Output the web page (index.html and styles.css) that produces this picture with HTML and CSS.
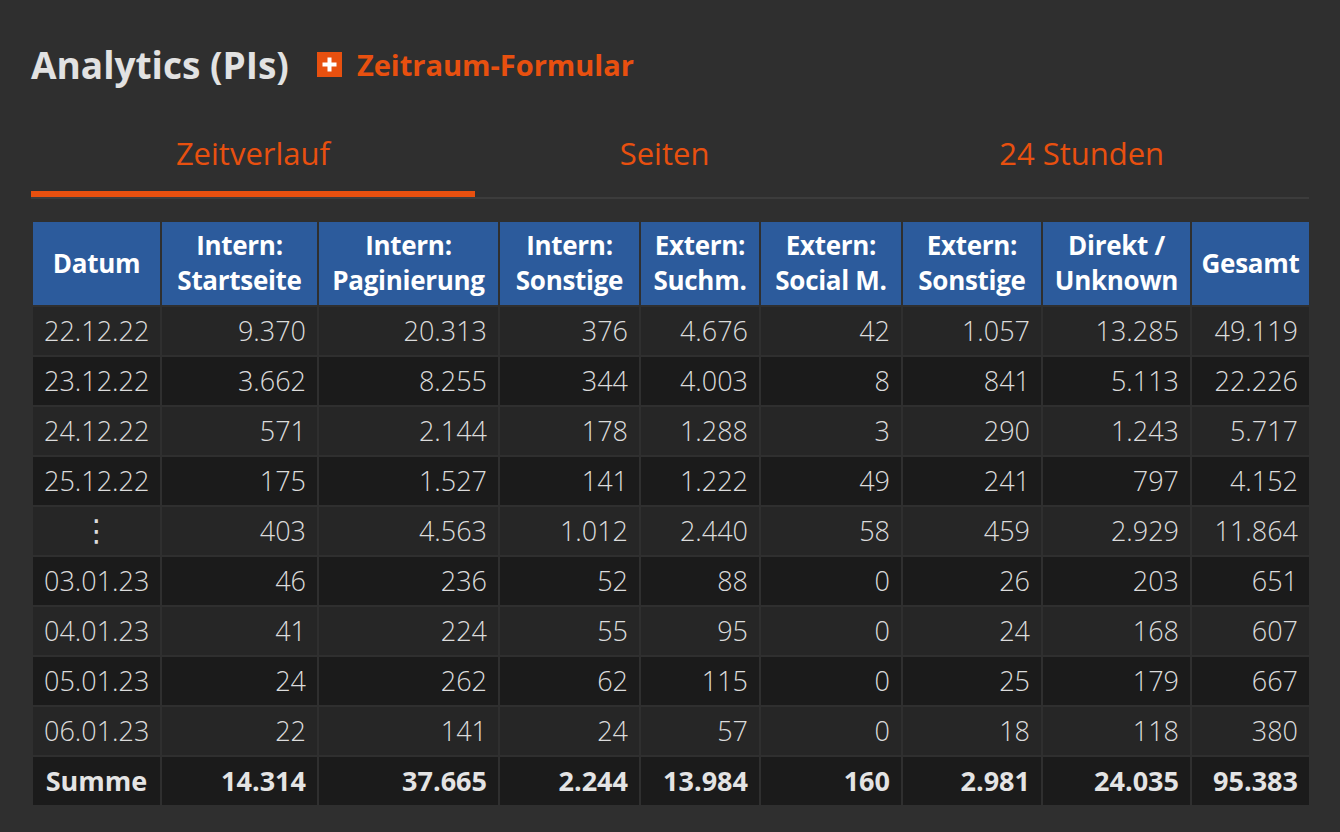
FILE: index.html
```html
<!DOCTYPE html>
<html lang="de">
<head>
<meta charset="utf-8">
<title>Analytics (PIs)</title>
<link rel="stylesheet" href="styles.css">
</head>
<body>
<div class="page">
  <div class="heading">
    <h1 class="title">Analytics (PIs)</h1>
    <a class="form-link" href="#">
      <span class="plus-box"><svg width="25" height="25" viewBox="0 0 25 25"><rect x="10.5" y="5.5" width="4" height="14" fill="#fff"/><rect x="5.5" y="10.5" width="14" height="4" fill="#fff"/></svg></span>
      <span class="form-text">Zeitraum-Formular</span>
    </a>
  </div>

  <div class="tabs">
    <div class="tab active">Zeitverlauf</div>
    <div class="tab">Seiten</div>
    <div class="tab">24 Stunden</div>
  </div>

  <table class="stats">
    <colgroup>
      <col class="c-datum"><col class="c-start"><col class="c-pag"><col class="c-isons"><col class="c-such"><col class="c-social"><col class="c-esons"><col class="c-direkt"><col class="c-ges">
    </colgroup>
    <thead>
      <tr>
        <th>Datum</th>
        <th>Intern:<br>Startseite</th>
        <th>Intern:<br>Paginierung</th>
        <th>Intern:<br>Sonstige</th>
        <th>Extern:<br>Suchm.</th>
        <th>Extern:<br>Social M.</th>
        <th>Extern:<br>Sonstige</th>
        <th>Direkt /<br>Unknown</th>
        <th>Gesamt</th>
      </tr>
    </thead>
    <tbody>
      <tr><td class="date">22.12.22</td><td>9.370</td><td>20.313</td><td>376</td><td>4.676</td><td>42</td><td>1.057</td><td>13.285</td><td>49.119</td></tr>
      <tr><td class="date">23.12.22</td><td>3.662</td><td>8.255</td><td>344</td><td>4.003</td><td>8</td><td>841</td><td>5.113</td><td>22.226</td></tr>
      <tr><td class="date">24.12.22</td><td>571</td><td>2.144</td><td>178</td><td>1.288</td><td>3</td><td>290</td><td>1.243</td><td>5.717</td></tr>
      <tr><td class="date">25.12.22</td><td>175</td><td>1.527</td><td>141</td><td>1.222</td><td>49</td><td>241</td><td>797</td><td>4.152</td></tr>
      <tr><td class="date gap">&#8942;</td><td>403</td><td>4.563</td><td>1.012</td><td>2.440</td><td>58</td><td>459</td><td>2.929</td><td>11.864</td></tr>
      <tr><td class="date">03.01.23</td><td>46</td><td>236</td><td>52</td><td>88</td><td>0</td><td>26</td><td>203</td><td>651</td></tr>
      <tr><td class="date">04.01.23</td><td>41</td><td>224</td><td>55</td><td>95</td><td>0</td><td>24</td><td>168</td><td>607</td></tr>
      <tr><td class="date">05.01.23</td><td>24</td><td>262</td><td>62</td><td>115</td><td>0</td><td>25</td><td>179</td><td>667</td></tr>
      <tr><td class="date">06.01.23</td><td>22</td><td>141</td><td>24</td><td>57</td><td>0</td><td>18</td><td>118</td><td>380</td></tr>
    </tbody>
    <tfoot>
      <tr><td class="date sum-label">Summe</td><td>14.314</td><td>37.665</td><td>2.244</td><td>13.984</td><td>160</td><td>2.981</td><td>24.035</td><td>95.383</td></tr>
    </tfoot>
  </table>
</div>
</body>
</html>
```

FILE: styles.css
```css
html, body {
  margin: 0;
  padding: 0;
  background: #2f2f2f;
}

body {
  font-family: "Open Sans", "Noto Sans", "DejaVu Sans", sans-serif;
  color: #d9d9d9;
}

.page {
  width: 1278px;
  padding: 36px 0 0 31px;
}

.heading {
  display: flex;
  align-items: center;
  gap: 28px;
  height: 56px;
}

.title {
  margin: 0;
  font-size: 37px;
  font-weight: 700;
  color: #e2e2e2;
  line-height: 1;
}

.form-link {
  display: flex;
  align-items: center;
  gap: 15px;
  text-decoration: none;
  color: #e8500f;
}

.plus-box {
  display: block;
  width: 25px;
  height: 25px;
  background: #e8500f;
}

.plus-box svg {
  display: block;
}

.form-text {
  font-size: 29px;
  font-weight: 700;
  line-height: 1;
}

.tabs {
  display: flex;
  margin-top: 18px;
  border-bottom: 2px solid #3c3c3c;
}

.tab {
  flex: 1 1 auto;
  text-align: center;
  font-size: 31px;
  font-weight: 400;
  color: #e8500f;
  padding: 23px 0 18px;
  line-height: 40px;
  border-bottom: 6px solid transparent;
}

.tab.active {
  border-bottom-color: #e8500f;
}

.stats {
  margin-top: 21px;
  width: 1280px;
  table-layout: fixed;
  border-collapse: separate;
  border-spacing: 2px;
  font-size: 27px;
}

.c-datum { width: 127px; }
.c-start { width: 155px; }
.c-pag { width: 179px; }
.c-isons { width: 139px; }
.c-such { width: 118px; }
.c-social { width: 140px; }
.c-esons { width: 138px; }
.c-direkt { width: 147px; }
.c-ges { width: 117px; }

.stats th {
  background: #2c5b9c;
  color: #ffffff;
  font-weight: 700;
  font-size: 26px;
  line-height: 35px;
  height: 70px;
  padding: 6px 2px 7px;
  text-align: center;
  letter-spacing: -0.3px;
  white-space: nowrap;
}

.stats td {
  height: 48px;
  padding: 0 11px;
  text-align: right;
  font-weight: 300;
  line-height: 48px;
  color: #dcdcdc;
  white-space: nowrap;
  box-sizing: border-box;
}

.stats tbody tr:nth-child(odd) td {
  background: #262626;
}

.stats tbody tr:nth-child(even) td {
  background: #1b1b1b;
}

.stats td.date {
  text-align: left;
}

.stats td.gap {
  text-align: center;
  font-family: "DejaVu Sans", sans-serif;
  font-size: 30px;
  font-weight: 400;
}

.stats tfoot td {
  background: #1b1b1b;
  font-weight: 700;
  color: #e4e4e4;
}

.stats tfoot td.sum-label {
  text-align: center;
}
```
